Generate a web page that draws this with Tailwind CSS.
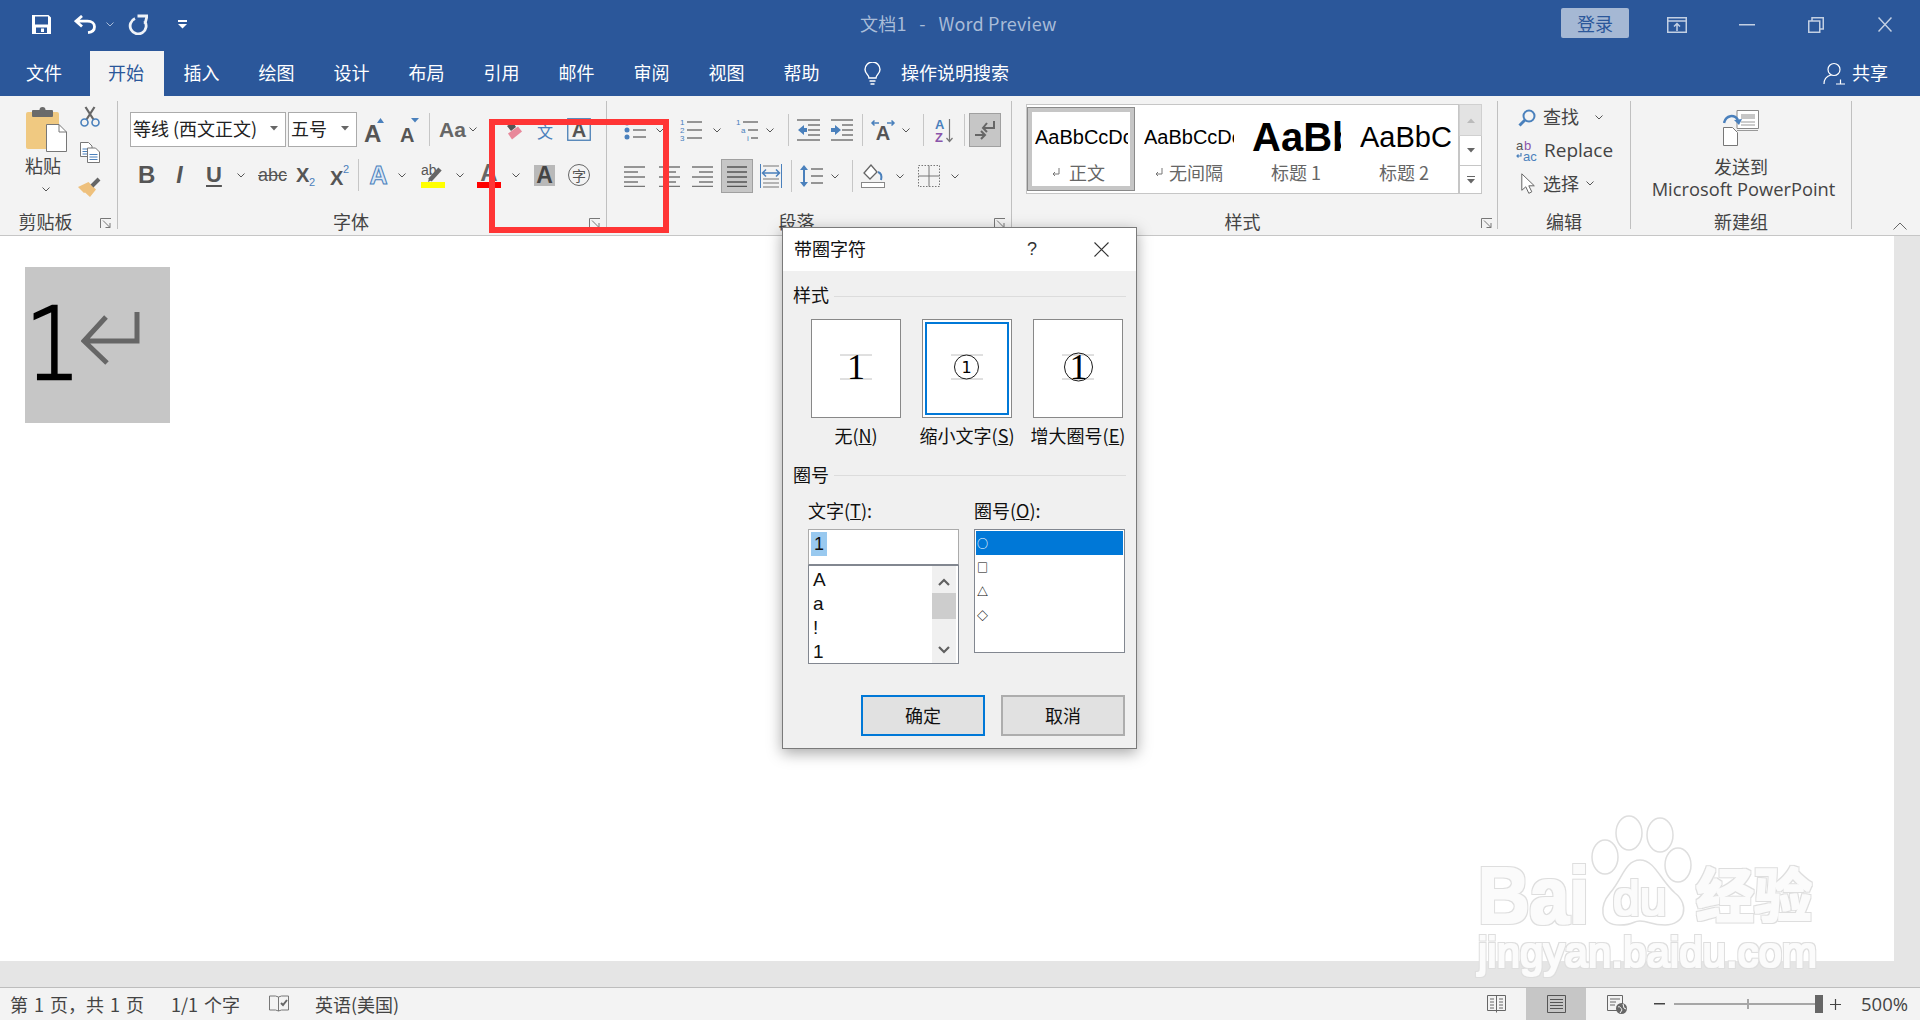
<!doctype html>
<html lang="zh">
<head>
<meta charset="utf-8">
<title>文档1 - Word Preview</title>
<script src="https://cdn.jsdelivr.net/npm/@tailwindcss/browser@4"></script>
</head>
<body class="font-['Noto_Sans_CJK_SC',sans-serif] text-[18px] text-[#444] overflow-hidden">
<div class="relative w-[1920px] h-[1020px] flex flex-col bg-white overflow-hidden">

  <!-- Title bar -->
  <div class="bg-[#2b579a] h-[96px] shrink-0 text-white">
    <div class="h-[51px] pb-[2px] flex items-center">
      <svg class="ml-[32px] shrink-0" width="19" height="19" viewBox="0 0 19 19"><path fill="#fff" fill-rule="evenodd" d="M0 0h16.500L19 2.500V19H0zM3 1.500v8h13v-8zM4 12.500V18h11v-5.500zM9 13.500h3V17H9z"/></svg>
      <svg class="ml-[23px] shrink-0" width="22" height="19" viewBox="0 0 22 19" fill="none" stroke="#fff" stroke-width="2.800"><path d="M8 1 2 6.200 8 11.500M2 6.200h11.500c4.500 0 7 2.500 7 5.600s-2.500 5.400-6.500 5.800"/></svg>
      <svg class="ml-[10px] shrink-0" width="8" height="5" viewBox="0 0 8 5" fill="none" stroke="#a9bcd8"><path d="M.5.500 4 4 7.500.5"/></svg>
      <svg class="ml-[14px] shrink-0" width="20" height="21" viewBox="0 0 20 21" fill="none" stroke="#eef2f8" stroke-width="2.800"><path d="M7 4.500A8 8 0 1 0 16.500 7M9.500 2H19l-2 8"/></svg>
      <svg class="ml-[30px] shrink-0" width="10" height="9" viewBox="0 0 10 9" fill="#fff"><rect width="9" height="2"/><path d="M0 4h9L4.500 8.500z"/></svg>
      <span class="ml-[672px] mb-[3px] text-[#a9bcd8] whitespace-nowrap tracking-[0.2px]">文档1&nbsp;&nbsp; -&nbsp;&nbsp; Word Preview</span>
      <div class="ml-auto mb-[3px] w-[68px] h-[30px] rounded-[2px] bg-[#a5b8d4] text-[#2b579a] flex items-center justify-center">登录</div>
      <svg class="ml-[38px] shrink-0" width="20" height="16" viewBox="0 0 20 16" fill="none" stroke="#c3d0e3" stroke-width="1.500"><rect x=".75" y=".75" width="18.500" height="14.500"/><path d="M1 4h18M10 14V7M7 9.500l3-3 3 3"/></svg>
      <svg class="ml-[52px] shrink-0" width="16" height="2" viewBox="0 0 16 2"><rect width="16" height="1.500" fill="#c3d0e3"/></svg>
      <svg class="ml-[53px] shrink-0" width="16" height="16" viewBox="0 0 16 16" fill="none" stroke="#c3d0e3" stroke-width="1.500"><rect x=".75" y="4" width="11" height="11.250"/><path d="M4 4V.75h11.250V12H12"/></svg>
      <svg class="ml-[54px] mr-[28px] shrink-0" width="14" height="15" viewBox="0 0 14 15" fill="none" stroke="#c3d0e3" stroke-width="1.500"><path d="m.5.500 13 14M13.500.5l-13 14"/></svg>
    </div>
    <div class="h-[45px] flex items-center">
      <div class="w-[90px] h-full flex items-center justify-center pr-[2px] pb-[2px]">文件</div>
      <div class="w-[74px] mr-[1px] h-full flex items-center justify-center pr-[2px] pb-[2px] bg-[#f3f3f3] text-[#2b579a]">开始</div>
      <div class="w-[75px] h-full flex items-center justify-center pr-[2px] pb-[2px]">插入</div>
      <div class="w-[75px] h-full flex items-center justify-center pr-[2px] pb-[2px]">绘图</div>
      <div class="w-[75px] h-full flex items-center justify-center pr-[2px] pb-[2px]">设计</div>
      <div class="w-[75px] h-full flex items-center justify-center pr-[2px] pb-[2px]">布局</div>
      <div class="w-[75px] h-full flex items-center justify-center pr-[2px] pb-[2px]">引用</div>
      <div class="w-[75px] h-full flex items-center justify-center pr-[2px] pb-[2px]">邮件</div>
      <div class="w-[75px] h-full flex items-center justify-center pr-[2px] pb-[2px]">审阅</div>
      <div class="w-[75px] h-full flex items-center justify-center pr-[2px] pb-[2px]">视图</div>
      <div class="w-[75px] h-full flex items-center justify-center pr-[2px] pb-[2px]">帮助</div>
      <svg class="ml-[24px] shrink-0" width="17" height="23" viewBox="0 0 17 23" fill="none" stroke="#fff" stroke-width="1.400"><path d="M5 16c0-3-4-4.500-4-8.500a7.500 7.500 0 0 1 15 0c0 4-4 5.500-4 8.500zM5.500 19h6M6.500 22h4"/></svg>
      <span class="ml-[20px] mb-[2px] whitespace-nowrap">操作说明搜索</span>
      <svg class="ml-auto shrink-0" width="22" height="23" viewBox="0 0 22 23" fill="none" stroke="#fff" stroke-width="1.200"><circle cx="11" cy="7.500" r="6"/><path d="M1 22c0-5 3-8 7-9M13 22h9M17.500 17.500v5"/></svg>
      <span class="ml-[7px] mr-[32px] mb-[2px] whitespace-nowrap">共享</span>
    </div>
  </div>

  <!-- Ribbon -->
  <div class="h-[140px] shrink-0 box-border border-b border-[#c6c6c6] bg-[#f3f3f3] flex pt-[5px]">

    <!-- Clipboard -->
    <div class="w-[118px] h-[128px] border-r border-[#c0c0c0] shrink-0">
      <div class="h-[109px] flex">
        <div class="ml-[25px] w-[42px] flex flex-col items-center pt-[6px]">
          <svg width="41" height="45" viewBox="0 0 41 45"><rect y="5" width="33" height="37" rx="2" fill="#f0c981"/><rect x="6" y="3" width="21" height="7" rx="1" fill="#6a6a6a"/><circle cx="16.500" cy="3" r="3" fill="#6a6a6a"/><path d="M20.500 17.500H33l7.500 7.500v19.500h-20z" fill="#fff" stroke="#777"/><path d="M33 17.500V25h7.500" fill="none" stroke="#777"/></svg>
          <span class="mt-[1px] mr-[6px] h-[24px] leading-[24px] whitespace-nowrap">粘贴</span>
          <svg class="mt-[10px]" width="8" height="5" viewBox="0 0 8 5" fill="none" stroke="#555"><path d="M.5.500 4 4 7.500.5"/></svg>
        </div>
        <div class="ml-[11px] w-[23px] flex flex-col items-center pt-[5px]">
          <svg width="20" height="21" viewBox="0 0 20 21" fill="none"><path d="M6.500 13.500 14.500 1M13.500 13.500 5.500 1" stroke="#666" stroke-width="2.200"/><circle cx="4.500" cy="16.500" r="3.500" stroke="#4a80bc" stroke-width="1.600"/><circle cx="15.500" cy="16.500" r="3.500" stroke="#4a80bc" stroke-width="1.600"/></svg>
          <svg class="mt-[15px]" width="20" height="21" viewBox="0 0 20 21"><path d="M.5.500h8l3.500 3.500v10.500H.5z" fill="#fff" stroke="#777"/><path d="M2.500 7h7M2.500 9.500h7M2.500 12h7" stroke="#4a80bc"/><path d="M7.500 6h8l4 4v10.500h-12z" fill="#fff" stroke="#777"/><path d="M9.500 12.500h8M9.500 15h8M9.500 17.500h8" stroke="#4a80bc"/></svg>
          <svg class="mt-[14px]" width="23" height="20" viewBox="0 0 23 20"><path d="M0 10 10.500 5 18 12.500 12 20 7 15.500 6 16z" fill="#eec07c"/><path d="m14 9 7-7" stroke="#666" stroke-width="4"/></svg>
        </div>
      </div>
      <div class="relative h-[24px] leading-[22px] flex justify-center pr-[26px] whitespace-nowrap">剪贴板
        <svg class="absolute right-[5px] bottom-[6px]" width="12" height="10" viewBox="0 0 12 10" fill="none" stroke="#777"><path d="M.5 10V.5H11M3 2.500l7 7M10 5v4.500H5.500"/></svg>
      </div>
    </div>

    <!-- Font -->
    <div class="w-[489px] h-[128px] border-r border-[#c0c0c0] shrink-0">
      <div class="h-[109px] pt-[11px]">
        <div class="h-[35px] flex items-center pl-[12px]">
          <div class="w-[156px] h-[35px] bg-white border border-[#ababab] flex items-center justify-between pl-[2px] pr-[7px] pb-[2px] text-[#222] whitespace-nowrap">等线 (西文正文)<svg width="8" height="5" viewBox="0 0 8 5" fill="#666"><path d="M0 0h8L4 4.500z"/></svg></div>
          <div class="ml-[2px] w-[69px] h-[35px] bg-white border border-[#ababab] flex items-center justify-between pl-[2px] pr-[7px] pb-[2px] text-[#222] whitespace-nowrap">五号<svg width="8" height="5" viewBox="0 0 8 5" fill="#666"><path d="M0 0h8L4 4.500z"/></svg></div>
          <svg class="ml-[7px] shrink-0 overflow-visible" width="22" height="26" viewBox="0 0 22 26"><text x="0" y="25" font-family="Liberation Sans" font-size="24" fill="#555" font-weight="bold">A</text><path d="M13 6l3.500-5L20 6z" fill="#4a80bc"/></svg>
          <svg class="ml-[14px] shrink-0 overflow-visible" width="20" height="26" viewBox="0 0 20 26"><text x="0" y="25" font-family="Liberation Sans" font-size="20" fill="#555" font-weight="bold">A</text><path d="M11 1h8l-4 4.500z" fill="#4a80bc"/></svg>
          <div class="ml-[9px] w-px h-[33px] bg-[#c6c6c6] shrink-0"></div>
          <span class="ml-[9px] w-[24px] text-[21px] leading-none text-[#666] font-['Liberation_Sans'] font-bold">Aa</span>
          <svg class="ml-[6px] shrink-0" width="8" height="5" viewBox="0 0 8 5" fill="none" stroke="#555"><path d="M.5.500 4 4 7.500.5"/></svg>
          <svg class="ml-[28px] shrink-0" width="18" height="22" viewBox="0 0 18 22"><path d="m2 7 6-4 3 5-5 4z" fill="#555"/><path d="m3 14.500 10-7 4 5-10 8z" fill="#e8889a"/></svg>
          <svg class="ml-[14px] shrink-0 overflow-visible" width="16" height="24" viewBox="0 0 16 24"><text x="8" y="20" text-anchor="middle" font-family="Noto Sans CJK SC" font-size="16" fill="#4a80bc">文</text></svg>
          <svg class="ml-[14px] shrink-0 overflow-visible" width="24" height="23" viewBox="0 0 24 23"><rect x=".75" y=".75" width="22.500" height="21.500" fill="none" stroke="#4a7fb5" stroke-width="1.300"/><text x="12" y="19" text-anchor="middle" font-family="Liberation Sans" font-size="20" font-weight="bold" fill="#555">A</text></svg>
        </div>
        <div class="mt-[11px] h-[34px] flex items-center pl-[20px]">
          <span class="w-[15px] text-center text-[24px] font-bold font-['Liberation_Sans'] leading-none text-[#555]">B</span>
          <span class="ml-[20px] w-[13px] text-center text-[23px] italic font-bold font-['Liberation_Sans'] leading-none text-[#555]">I</span>
          <span class="ml-[20px] w-[14px] text-center text-[22px] font-bold underline underline-offset-[3px] font-['Liberation_Sans'] leading-none text-[#555]">U</span>
          <svg class="ml-[17px] shrink-0" width="8" height="5" viewBox="0 0 8 5" fill="none" stroke="#555"><path d="M.5.500 4 4 7.500.5"/></svg>
          <span class="ml-[13px] w-[24px] text-[18px] line-through font-['Liberation_Sans'] leading-none text-[#555]">abc</span>
          <svg class="ml-[14px] shrink-0 overflow-visible" width="19" height="24" viewBox="0 0 19 24"><text x="0" y="19" font-family="Liberation Sans" font-size="20" font-weight="bold" fill="#555">X</text><text x="13" y="23" font-family="Liberation Sans" font-size="11" fill="#4a80bc">2</text></svg>
          <svg class="ml-[15px] shrink-0 overflow-visible" width="19" height="24" viewBox="0 0 19 24"><text x="0" y="22" font-family="Liberation Sans" font-size="20" font-weight="bold" fill="#555">X</text><text x="13" y="10" font-family="Liberation Sans" font-size="11" fill="#4a80bc">2</text></svg>
          <div class="ml-[9px] w-px h-[32px] bg-[#c6c6c6] shrink-0"></div>
          <svg class="ml-[10px] shrink-0 overflow-visible" width="19" height="24" viewBox="0 0 19 24"><text x="9.500" y="21" text-anchor="middle" font-family="Liberation Sans" font-size="25" font-weight="bold" fill="#dbe8f5" stroke="#4a80bc" stroke-width="1">A</text></svg>
          <svg class="ml-[10px] shrink-0" width="8" height="5" viewBox="0 0 8 5" fill="none" stroke="#555"><path d="M.5.500 4 4 7.500.5"/></svg>
          <svg class="ml-[15px] shrink-0 overflow-visible" width="24" height="25" viewBox="0 0 24 25"><text x="0" y="12" font-family="Liberation Sans" font-size="14" fill="#555">ab</text><path d="m9 17 10-11" stroke="#666" stroke-width="4.500"/><path d="m7 19 1-4 3 2z" fill="#666"/><rect y="19" width="24" height="6" fill="#ffff00"/></svg>
          <svg class="ml-[11px] shrink-0" width="8" height="5" viewBox="0 0 8 5" fill="none" stroke="#555"><path d="M.5.500 4 4 7.500.5"/></svg>
          <svg class="ml-[13px] shrink-0 overflow-visible" width="24" height="25" viewBox="0 0 24 25"><text x="12" y="18" text-anchor="middle" font-family="Liberation Sans" font-size="24" font-weight="bold" fill="#666">A</text><rect y="19" width="24" height="6" fill="#ff0000"/></svg>
          <svg class="ml-[11px] shrink-0" width="8" height="5" viewBox="0 0 8 5" fill="none" stroke="#555"><path d="M.5.500 4 4 7.500.5"/></svg>
          <div class="ml-[14px] w-[21px] h-[21px] bg-[#b9b9b9] flex items-center justify-center text-[23px] leading-none font-bold font-['Liberation_Sans'] text-[#444] shrink-0">A</div>
          <div class="ml-[13px] w-[22px] h-[22px] rounded-full border border-[#666] flex items-center justify-center text-[14px] leading-none text-[#555] shrink-0">字</div>
        </div>
      </div>
      <div class="relative h-[24px] leading-[22px] flex justify-center pr-[22px]">字体
        <svg class="absolute right-[5px] bottom-[6px]" width="12" height="10" viewBox="0 0 12 10" fill="none" stroke="#777"><path d="M.5 10V.5H11M3 2.500l7 7M10 5v4.500H5.500"/></svg>
      </div>
    </div>

    <!-- Paragraph -->
    <div class="w-[405px] h-[128px] border-r border-[#c0c0c0] shrink-0">
      <div class="h-[109px] pt-[12px]">
        <div class="h-[34px] flex items-center pl-[17px]">
          <svg class="shrink-0" width="22" height="22" viewBox="0 0 22 22"><circle cx="3" cy="4" r="2.500" fill="#4a80bc"/><circle cx="3" cy="11" r="2.500" fill="#4a80bc"/><circle cx="3" cy="18" r="2.500" fill="#4a80bc"/><path d="M9 4h13M9 11h13M9 18h13" stroke="#777" stroke-width="1.300"/></svg>
          <svg class="ml-[10px] shrink-0" width="8" height="5" viewBox="0 0 8 5" fill="none" stroke="#555"><path d="M.5.500 4 4 7.500.5"/></svg>
          <svg class="ml-[16px] shrink-0 overflow-visible" width="22" height="24" viewBox="0 0 22 24"><text x="0" y="7" font-family="Liberation Sans" font-size="8" fill="#4a80bc">1</text><text x="0" y="15" font-family="Liberation Sans" font-size="8" fill="#4a80bc">2</text><text x="0" y="23" font-family="Liberation Sans" font-size="8" fill="#4a80bc">3</text><path d="M7 4h15M7 12h15M7 20h15" stroke="#777" stroke-width="1.300"/></svg>
          <svg class="ml-[11px] shrink-0" width="8" height="5" viewBox="0 0 8 5" fill="none" stroke="#555"><path d="M.5.500 4 4 7.500.5"/></svg>
          <svg class="ml-[15px] shrink-0 overflow-visible" width="22" height="24" viewBox="0 0 22 24"><text x="0" y="7" font-family="Liberation Sans" font-size="8" fill="#4a80bc">1</text><text x="5" y="15" font-family="Liberation Sans" font-size="8" fill="#4a80bc">a</text><text x="11" y="23" font-family="Liberation Sans" font-size="8" fill="#4a80bc">i</text><path d="M7 4h15M12 12h10M15 20h7" stroke="#777" stroke-width="1.300"/></svg>
          <svg class="ml-[8px] shrink-0" width="8" height="5" viewBox="0 0 8 5" fill="none" stroke="#555"><path d="M.5.500 4 4 7.500.5"/></svg>
          <div class="ml-[14px] w-px h-[32px] bg-[#c6c6c6] shrink-0"></div>
          <svg class="ml-[8px] shrink-0" width="23" height="22" viewBox="0 0 23 22"><path d="M0 1h23M11 6h12M11 11h12M11 16h12M0 21h23" stroke="#777" stroke-width="1.300"/><path d="M1 11l6-5v3h3v4H7v3z" fill="#4a80bc"/></svg>
          <svg class="ml-[11px] shrink-0" width="22" height="22" viewBox="0 0 22 22"><path d="M0 1h22M11 6h11M11 11h11M11 16h11M0 21h22" stroke="#777" stroke-width="1.300"/><path d="M10 11 4 6v3H0v4h4v3z" fill="#4a80bc"/></svg>
          <div class="ml-[9px] w-px h-[32px] bg-[#c6c6c6] shrink-0"></div>
          <svg class="ml-[8px] shrink-0 overflow-visible" width="24" height="22" viewBox="0 0 24 22"><text x="12" y="21" text-anchor="middle" font-family="Liberation Sans" font-size="20" font-weight="bold" fill="#555">A</text><path d="M1 4h7M3.500 1.500 1 4l2.500 2.500M23 4h-7M20.500 1.500 23 4l-2.500 2.500" fill="none" stroke="#4a80bc" stroke-width="1.500"/></svg>
          <svg class="ml-[7px] shrink-0" width="8" height="5" viewBox="0 0 8 5" fill="none" stroke="#555"><path d="M.5.500 4 4 7.500.5"/></svg>
          <div class="ml-[13px] w-px h-[32px] bg-[#c6c6c6] shrink-0"></div>
          <svg class="ml-[11px] shrink-0 overflow-visible" width="19" height="25" viewBox="0 0 19 25"><text x="0" y="11" font-family="Liberation Sans" font-size="13" font-weight="bold" fill="#4a80bc">A</text><text x="0" y="24" font-family="Liberation Sans" font-size="13" font-weight="bold" fill="#8a55aa">Z</text><path d="M14.500 1v22M11.500 20l3 3.500 3-3.500" fill="none" stroke="#777" stroke-width="1.200"/></svg>
          <div class="ml-[10px] w-px h-[32px] bg-[#c6c6c6] shrink-0"></div>
          <div class="ml-[4px] w-[32px] h-[34px] bg-[#c6c6c6] border border-[#a0a0a0] flex items-center justify-center shrink-0">
            <svg width="22" height="20" viewBox="0 0 22 20" fill="none" stroke="#666" stroke-width="2"><path d="M20 1v7H9M13 3 9 8l4 4M1 15h9M7 11l4 4-4 4"/></svg>
          </div>
        </div>
        <div class="mt-[12px] h-[34px] flex items-center pl-[17px]">
          <svg class="shrink-0" width="21" height="21" viewBox="0 0 21 21" stroke="#777" stroke-width="1.300"><path d="M0 1h21M0 6h14M0 11h21M0 16h14M0 20.500h21"/></svg>
          <svg class="ml-[14px] shrink-0" width="21" height="21" viewBox="0 0 21 21" stroke="#777" stroke-width="1.300"><path d="M0 1h21M4 6h13M0 11h21M4 16h13M0 20.500h21"/></svg>
          <svg class="ml-[12px] shrink-0" width="21" height="21" viewBox="0 0 21 21" stroke="#777" stroke-width="1.300"><path d="M0 1h21M7 6h14M0 11h21M7 16h14M0 20.500h21"/></svg>
          <div class="ml-[8px] w-[32px] h-[34px] bg-[#c6c6c6] border border-[#a0a0a0] flex items-center justify-center shrink-0">
            <svg width="20" height="21" viewBox="0 0 20 21" stroke="#555" stroke-width="1.300"><path d="M0 1h20M0 6h20M0 11h20M0 16h20M0 20.500h20"/></svg>
          </div>
          <svg class="ml-[7px] shrink-0" width="22" height="24" viewBox="0 0 22 24"><path d="M.5 0v24M21.500 0v24" stroke="#4a80bc"/><path d="M3 9h16M6 5.500 2.500 9 6 12.500M16 5.500 19.500 9 16 12.500" fill="none" stroke="#4a80bc" stroke-width="1.500"/><path d="M3 2h16M3 15h16M3 19h16M3 23h16" stroke="#777" stroke-width="1.200"/></svg>
          <div class="ml-[9px] w-px h-[32px] bg-[#c6c6c6] shrink-0"></div>
          <svg class="ml-[8px] shrink-0" width="23" height="24" viewBox="0 0 23 24"><path d="M4 3v18" stroke="#4a80bc" stroke-width="2"/><path d="M0 6l4-5 4 5zM0 18l4 5 4-5z" fill="#4a80bc"/><path d="M11 5h12M11 12h12M11 19h12" stroke="#777" stroke-width="1.300"/></svg>
          <svg class="ml-[8px] shrink-0" width="8" height="5" viewBox="0 0 8 5" fill="none" stroke="#555"><path d="M.5.500 4 4 7.500.5"/></svg>
          <div class="ml-[13px] w-px h-[32px] bg-[#c6c6c6] shrink-0"></div>
          <svg class="ml-[8px] shrink-0" width="24" height="24" viewBox="0 0 24 24"><path d="M10 1 3 9l6 6 7-7z" fill="#fff" stroke="#666" stroke-width="1.300"/><path d="M17 8c3 1 4 4 3 8" fill="none" stroke="#4a80bc" stroke-width="2"/><rect x=".5" y="18.500" width="23" height="5" fill="#fff" stroke="#888"/></svg>
          <svg class="ml-[11px] shrink-0" width="8" height="5" viewBox="0 0 8 5" fill="none" stroke="#555"><path d="M.5.500 4 4 7.500.5"/></svg>
          <svg class="ml-[14px] shrink-0" width="22" height="22" viewBox="0 0 22 22" fill="none" stroke="#777"><path d="M.5.500h21v21H.5z" stroke-dasharray="1.500 1.500"/><path d="M11 .5v21M.5 11h21"/></svg>
          <svg class="ml-[11px] shrink-0" width="8" height="5" viewBox="0 0 8 5" fill="none" stroke="#555"><path d="M.5.500 4 4 7.500.5"/></svg>
        </div>
      </div>
      <div class="relative h-[24px] leading-[22px] flex justify-center pr-[25px]">段落
        <svg class="absolute right-[5px] bottom-[6px]" width="12" height="10" viewBox="0 0 12 10" fill="none" stroke="#777"><path d="M.5 10V.5H11M3 2.500l7 7M10 5v4.500H5.500"/></svg>
      </div>
    </div>

    <!-- Styles -->
    <div class="w-[486px] h-[128px] border-r border-[#c0c0c0] shrink-0">
      <div class="h-[109px] pl-[14px] pt-[3px]">
        <div class="flex h-[90px] w-[456px]">
          <div class="w-[433px] h-[90px] bg-white border border-[#c6c6c6] flex items-start pt-[2px]">
            <div class="w-[108px] h-[84px] border border-[#8a8a8a] shrink-0 overflow-hidden">
              <div class="h-full border-[4px] border-[#c6c6c6] flex flex-col">
                <div class="h-[50px] pl-[3px] w-[96px] overflow-hidden whitespace-nowrap leading-[50px] text-[20px] text-black font-['Liberation_Sans']">AaBbCcDc</div>
                <div class="h-[22px] pl-[20px] pb-[2px] flex items-center text-[#666]"><svg class="mr-[9px] mt-[2px] shrink-0" width="8" height="10" viewBox="0 0 8 10" fill="none" stroke="#777"><path d="M7 0v6H1M3 4 1 6l2 2"/></svg>正文</div>
              </div>
            </div>
            <div class="w-[108px] h-[84px] pt-[5px] shrink-0">
              <div class="h-[50px] ml-[9px] w-[90px] overflow-hidden whitespace-nowrap leading-[50px] text-[20px] text-black font-['Liberation_Sans']">AaBbCcDc</div>
              <div class="h-[22px] pl-[20px] pb-[2px] flex items-center text-[#666]"><svg class="mr-[6px] mt-[2px] shrink-0" width="8" height="10" viewBox="0 0 8 10" fill="none" stroke="#777"><path d="M7 0v6H1M3 4 1 6l2 2"/></svg>无间隔</div>
            </div>
            <div class="w-[108px] h-[84px] pt-[5px] shrink-0">
              <div class="h-[50px] ml-[9px] w-[89px] overflow-hidden whitespace-nowrap leading-[50px] text-[40px] font-bold text-black font-['Liberation_Sans']">AaBbCc</div>
              <div class="h-[22px] leading-[20px] pl-[28px] text-[#666] whitespace-nowrap">标题 1</div>
            </div>
            <div class="w-[108px] h-[84px] pt-[5px] shrink-0">
              <div class="h-[50px] ml-[9px] w-[91px] overflow-hidden whitespace-nowrap leading-[50px] text-[29px] text-black font-['Liberation_Sans']">AaBbC</div>
              <div class="h-[22px] leading-[20px] pl-[28px] text-[#666] whitespace-nowrap">标题 2</div>
            </div>
          </div>
          <div class="w-[23px] h-[90px] flex flex-col">
            <div class="h-[32px] bg-[#e3e3e3] border border-[#d0d0d0] flex items-center justify-center"><svg width="8" height="5" viewBox="0 0 8 5" fill="#bbb"><path d="M0 5h8L4 .5z"/></svg></div>
            <div class="h-[29px] bg-white border-x border-[#c6c6c6] flex items-center justify-center"><svg width="8" height="5" viewBox="0 0 8 5" fill="#666"><path d="M0 0h8L4 4.500z"/></svg></div>
            <div class="h-[29px] bg-white border border-[#c6c6c6] flex flex-col items-center justify-center gap-[2px]"><div class="w-[8px] h-px bg-[#666]"></div><svg width="8" height="5" viewBox="0 0 8 5" fill="#666"><path d="M0 0h8L4 4.500z"/></svg></div>
          </div>
        </div>
      </div>
      <div class="relative h-[24px] leading-[22px] flex justify-center pr-[24px]">样式
        <svg class="absolute right-[4px] bottom-[6px]" width="12" height="10" viewBox="0 0 12 10" fill="none" stroke="#777"><path d="M.5 10V.5H11M3 2.500l7 7M10 5v4.500H5.500"/></svg>
      </div>
    </div>

    <!-- Editing -->
    <div class="w-[133px] h-[128px] border-r border-[#c0c0c0] shrink-0">
      <div class="h-[109px]">
        <div class="h-[33px] flex items-center pl-[20px]">
          <svg class="shrink-0" width="18" height="18" viewBox="0 0 18 18" fill="none" stroke="#4a80bc"><circle cx="11" cy="7" r="5.500" stroke-width="2"/><path d="M7 11 1.500 16.500" stroke-width="3"/></svg>
          <span class="ml-[7px] mb-[2px] whitespace-nowrap">查找</span>
          <svg class="ml-[16px] shrink-0" width="8" height="5" viewBox="0 0 8 5" fill="none" stroke="#555"><path d="M.5.500 4 4 7.500.5"/></svg>
        </div>
        <div class="h-[33px] flex items-center pl-[18px]">
          <svg class="shrink-0 overflow-visible" width="22" height="22" viewBox="0 0 22 22"><text x="0" y="10" font-family="Liberation Sans" font-size="13" fill="#555">a</text><text x="8" y="10" font-family="Liberation Sans" font-size="13" fill="#8a55aa">b</text><text x="7" y="21" font-family="Liberation Sans" font-size="13" fill="#4a80bc">ac</text><path d="M5 13v3H1M2.500 14.500 1 16l1.500 1.500" fill="none" stroke="#4a80bc" stroke-width="1.200"/></svg>
          <span class="ml-[6px] whitespace-nowrap font-['Open_Sans'] text-[19px]">Replace</span>
        </div>
        <div class="h-[33px] flex items-center pl-[23px]">
          <svg class="shrink-0" width="14" height="21" viewBox="0 0 14 21"><path d="M.8.800v16.500l4-3.500 3 6.500 3-1.500-3-6h5.500z" fill="#fff" stroke="#666"/></svg>
          <span class="ml-[8px] whitespace-nowrap">选择</span>
          <svg class="ml-[7px] shrink-0" width="8" height="5" viewBox="0 0 8 5" fill="none" stroke="#555"><path d="M.5.500 4 4 7.500.5"/></svg>
        </div>
      </div>
      <div class="h-[24px] leading-[22px] flex justify-center">编辑</div>
    </div>

    <!-- New group -->
    <div class="w-[221px] h-[128px] border-r border-[#c0c0c0] shrink-0">
      <div class="h-[109px] flex flex-col items-center">
        <svg class="mt-[9px]" width="36" height="36" viewBox="0 0 36 36" fill="none"><path d="M14 .5h21.500v18H14z" fill="#fff" stroke="#888"/><rect x="18" y="4" width="14" height="5" fill="#c6c6c6"/><path d="M18 12h14M18 15h14M14 20.500h21" stroke="#999"/><path d="M.5 17.500h9l5 5v13H.5z" fill="#fff" stroke="#777"/><path d="M1 13c2-8 10-9 14-3" stroke="#4a80bc" stroke-width="2.500"/><path d="M11 10l5 5 3-6z" fill="#4a80bc"/></svg>
        <div class="mt-[9px] h-[22px] leading-[22px]">发送到</div>
        <div class="mt-[1px] ml-[5px] h-[22px] leading-[22px] whitespace-nowrap font-['Open_Sans'] text-[18.300px]">Microsoft PowerPoint</div>
      </div>
      <div class="h-[24px] leading-[22px] flex justify-center">新建组</div>
    </div>

    <!-- Collapse -->
    <div class="flex-1 h-[129px] flex items-end justify-end pr-[13px]">
      <svg width="14" height="8" viewBox="0 0 14 8" fill="none" stroke="#666"><path d="M.5 7.500 7 1l6.500 6.500"/></svg>
    </div>
  </div>

  <!-- Document -->
  <div class="flex-1 flex min-h-0">
    <div class="flex-1 bg-white pl-[25px] pt-[31px]">
      <div class="w-[145px] h-[156px] bg-[#c6c6c6] flex items-center">
        <span class="inline-block w-[57px] scale-x-[0.88] origin-left text-[100px] leading-none text-black font-['DejaVu_Sans'] font-extralight [-webkit-text-stroke:2.500px_black]">1</span>
        <svg class="mb-[16px] -ml-[1px]" width="60" height="60" viewBox="0 0 60 60" fill="none" stroke="#666" stroke-width="5"><path d="M56 5v29H3M25 10 3 34l23 22"/></svg>
      </div>
    </div>
    <div class="w-[26px] bg-[#e5e5e5]"></div>
  </div>
  <div class="h-[27px] shrink-0 bg-[#e5e5e5] border-b border-[#bdbdbd]"></div>

  <!-- Status bar -->
  <div class="h-[32px] shrink-0 bg-[#f3f3f3] flex items-center text-[18px] text-[#444] [word-spacing:2px]">
    <span class="ml-[10px] w-[132px] whitespace-nowrap">第 1 页，共 1 页</span>
    <span class="ml-[29px] w-[70px] whitespace-nowrap">1/1 个字</span>
    <svg class="ml-[28px] shrink-0" width="20" height="18" viewBox="0 0 20 18" fill="none" stroke="#777"><path d="M.5 1h6l3 1v14l-3-1h-6zM9.500 2l3-1h7v14h-7l-3 1"/><path d="m12 8 2 2 4-5" stroke="#666" stroke-width="2"/></svg>
    <span class="ml-[26px] whitespace-nowrap">英语(美国)</span>
    <svg class="ml-auto shrink-0" width="19" height="18" viewBox="0 0 19 18" fill="none" stroke="#666"><path d="M.5.500h18v15h-18zM9.500.5v17M3 4h4M3 7h4M3 10h4M3 13h4M12 4h4M12 7h4M12 10h4M12 13h4"/></svg>
    <div class="ml-[20px] w-[60px] h-full bg-[#c6c6c6] flex items-center justify-center shrink-0">
      <svg width="19" height="18" viewBox="0 0 19 18" fill="none" stroke="#555"><path d="M.5.500h18v17H.5zM3 4.500h13M3 7.500h13M3 10.500h13M3 13.500h13"/></svg>
    </div>
    <svg class="ml-[21px] shrink-0" width="20" height="19" viewBox="0 0 20 19" fill="none"><path d="M.5.500h15v15H.5zM3 4h10M3 7h6M3 10h5" stroke="#666"/><circle cx="14.500" cy="13.500" r="5.500" fill="#666"/><path d="M11 12c2-1 3 1 4 3l-2 3M16 9l1 4 2 1" stroke="#fff"/></svg>
    <svg class="ml-[27px] shrink-0" width="11" height="2" viewBox="0 0 11 2"><rect width="11" height="1.500" fill="#444"/></svg>
    <svg class="ml-[9px] shrink-0" width="149" height="18" viewBox="0 0 149 18"><rect y="8" width="149" height="2" fill="#a6a6a6"/><rect x="73" y="4" width="2" height="10" fill="#a6a6a6"/><rect x="141" width="8" height="18" fill="#666"/></svg>
    <svg class="ml-[7px] shrink-0" width="11" height="11" viewBox="0 0 11 11" stroke="#444" stroke-width="1.200"><path d="M0 5.500h11M5.500 0v11"/></svg>
    <span class="ml-[20px] mr-[12px] w-[47px] text-[18.500px] whitespace-nowrap font-['Open_Sans']">500%</span>
  </div>

  <!-- Watermark -->
  <svg class="absolute left-[1470px] top-[810px]" width="360" height="175" viewBox="1470 810 360 175" fill="#fff" stroke="#dedede" stroke-width="1.500">
    <defs>
      <filter id="wm" x="-5%" y="-10%" width="110%" height="120%">
        <feMorphology in="SourceAlpha" operator="dilate" radius="2.400" result="o"/>
        <feGaussianBlur in="o" stdDeviation="0.700" result="ob"/>
        <feFlood flood-color="#dedede"/>
        <feComposite in2="ob" operator="in" result="outline"/>
        <feMorphology in="SourceAlpha" operator="dilate" radius="1.400" result="i"/>
        <feFlood flood-color="#ffffff" flood-opacity="0.85"/>
        <feComposite in2="i" operator="in" result="inner"/>
        <feMerge><feMergeNode in="outline"/><feMergeNode in="inner"/></feMerge>
      </filter>
    </defs>
    <ellipse cx="1629" cy="833" rx="13" ry="17"/>
    <ellipse cx="1660" cy="835" rx="13" ry="17"/>
    <ellipse cx="1605" cy="857" rx="13" ry="17"/>
    <ellipse cx="1678" cy="865" rx="13" ry="17"/>
    <path d="M1640 860c-15 0-18 20-30 33-10 12-12 32 10 32 15 0 12-4 20-4 10 0 10 4 25 4 20 0 25-20 10-32-15-13-20-33-35-33z"/>
    <g filter="url(#wm)" stroke="none">
      <text x="1478" y="923" font-family="Liberation Sans" font-weight="bold" font-size="80" textLength="111" lengthAdjust="spacingAndGlyphs">Bai</text>
      <text x="1613" y="915" font-family="Liberation Sans" font-size="48">du</text>
      <text x="1696" y="917" font-family="Noto Sans CJK SC" font-weight="bold" font-size="58">经验</text>
      <text x="1478" y="967" font-family="Liberation Sans" font-size="42" textLength="339">jingyan.baidu.com</text>
    </g>
  </svg>

  <!-- Red annotation -->
  <div class="absolute left-[489px] top-[119px] w-[180px] h-[114px] border-[6px] border-[#ff3535]"></div>

  <!-- Dialog -->
  <div class="absolute left-[782px] top-[227px] w-[355px] h-[522px] bg-[#f0f0f0] border border-[#7a7a7a] shadow-[0_4px_14px_rgba(0,0,0,0.35)] text-[#111]">
    <div class="h-[43px] bg-white flex items-center pl-[11px]">
      <span class="mb-[2px]">带圈字符</span>
      <span class="ml-auto text-[#333] font-['Liberation_Sans']">?</span>
      <svg class="ml-[57px] mr-[27px] shrink-0" width="15" height="15" viewBox="0 0 15 15" fill="none" stroke="#333" stroke-width="1.100"><path d="m.5.500 14 14M14.500.5l-14 14"/></svg>
    </div>
    <div class="mt-[13px] h-[24px] flex items-center pl-[10px]">
      <span class="mb-[3px] whitespace-nowrap">样式</span><div class="ml-[5px] mr-[10px] flex-1 h-px bg-[#dcdcdc]"></div>
    </div>
    <div class="mt-[11px] pl-[28px] flex gap-[21px]">
      <div class="w-[90px] h-[99px] bg-white border border-[#888] flex items-center justify-center pb-[3px]">
        <svg width="32" height="40" viewBox="0 0 32 40"><path d="M0 8h32M0 32h32" stroke="#c0c0c0"/><text x="16" y="32" text-anchor="middle" font-family="Liberation Serif" font-size="36" fill="#000">1</text></svg>
      </div>
      <div class="w-[90px] h-[99px] bg-white border border-[#888] p-[2px]">
        <div class="h-full border-[2px] border-[#0078d7] flex items-center justify-center pb-[3px]">
          <svg width="32" height="40" viewBox="0 0 32 40"><path d="M0 8h32M0 32h32" stroke="#c0c0c0"/><circle cx="15.500" cy="20" r="12" fill="#fff" stroke="#000" stroke-width=".9"/><text x="15.500" y="26" text-anchor="middle" font-family="DejaVu Sans" font-size="16" fill="#000">1</text></svg>
        </div>
      </div>
      <div class="w-[90px] h-[99px] bg-white border border-[#888] flex items-center justify-center pb-[3px]">
        <svg width="32" height="40" viewBox="0 0 32 40"><path d="M0 8h32M0 32h32" stroke="#c0c0c0"/><circle cx="16.500" cy="20" r="14" fill="none" stroke="#000" stroke-width=".9"/><text x="16.500" y="32" text-anchor="middle" font-family="Liberation Serif" font-size="36" fill="#000">1</text></svg>
      </div>
    </div>
    <div class="mt-[7px] h-[24px] pl-[28px] flex gap-[21px] leading-[21px]">
      <div class="w-[90px] flex justify-center whitespace-nowrap">无(<span class="underline">N</span>)</div>
      <div class="w-[90px] flex justify-center whitespace-nowrap">缩小文字(<span class="underline">S</span>)</div>
      <div class="w-[90px] flex justify-center whitespace-nowrap">增大圈号(<span class="underline">E</span>)</div>
    </div>
    <div class="mt-[14px] h-[24px] flex items-center pl-[10px]">
      <span class="mb-[1px] whitespace-nowrap">圈号</span><div class="ml-[5px] mr-[10px] flex-1 h-px bg-[#dcdcdc]"></div>
    </div>
    <div class="mt-[13px] pl-[25px] flex gap-[15px]">
      <div class="w-[151px]">
        <div class="h-[24px] leading-[20px] whitespace-nowrap">文字(<span class="underline">T</span>):</div>
        <div class="mt-[5px] h-[36px] bg-white border border-[#ababab] border-b-[#828790] pl-[2px] pt-[2px]">
          <span class="block w-[16px] h-[24px] leading-[24px] bg-[#99c9ef] text-center font-['Liberation_Sans']">1</span>
        </div>
        <div class="h-[99px] bg-white border border-[#828790] flex">
          <div class="flex-1 pl-[4px] pt-[2px] text-[19px] font-['Liberation_Sans']">
            <div class="h-[24px] leading-[24px]">A</div>
            <div class="h-[24px] leading-[24px]">a</div>
            <div class="h-[24px] leading-[24px]">!</div>
            <div class="h-[24px] leading-[24px]">1</div>
          </div>
          <div class="w-[24px] mr-[2px] bg-[#f0f0f0] flex flex-col">
            <div class="h-[27px] flex items-center justify-center pt-[4px]"><svg width="12" height="8" viewBox="0 0 12 8" fill="none" stroke="#606060" stroke-width="2.200"><path d="m1 7 5-5 5 5"/></svg></div>
            <div class="h-[26px] bg-[#cdcdcd]"></div>
            <div class="flex-1 flex items-end justify-center pb-[9px]"><svg width="12" height="8" viewBox="0 0 12 8" fill="none" stroke="#606060" stroke-width="2.200"><path d="m1 1 5 5 5-5"/></svg></div>
          </div>
        </div>
      </div>
      <div class="w-[151px]">
        <div class="h-[24px] leading-[20px] whitespace-nowrap">圈号(<span class="underline">O</span>):</div>
        <div class="mt-[5px] h-[124px] bg-white border border-[#828790] p-[1px] text-[11px] font-bold text-black">
          <div class="h-[24px] leading-[24px] pl-[1px] bg-[#0078d7] text-white">○</div>
          <div class="h-[24px] leading-[24px] pl-[1px]">□</div>
          <div class="h-[24px] leading-[24px] pl-[1px]">△</div>
          <div class="h-[24px] leading-[24px] pl-[1px]">◇</div>
        </div>
      </div>
    </div>
    <div class="mt-[31px] pl-[78px] flex gap-[16px]">
      <div class="w-[124px] h-[41px] bg-[#e1e1e1] border-2 border-[#0078d7] flex items-center justify-center">确定</div>
      <div class="w-[124px] h-[41px] bg-[#e1e1e1] border-2 border-[#adadad] flex items-center justify-center">取消</div>
    </div>
  </div>
</div>
</body>
</html>
